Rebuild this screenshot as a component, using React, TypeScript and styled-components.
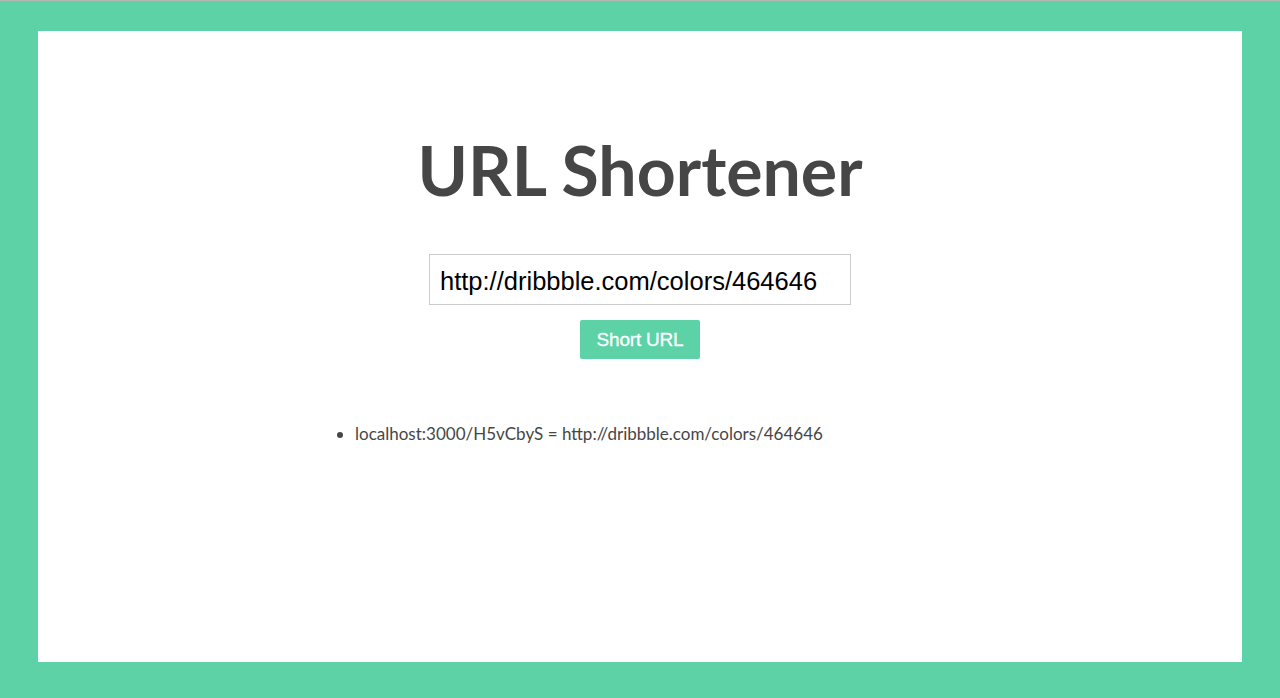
import React from "react";
import styled, { createGlobalStyle } from "styled-components";

const Global = createGlobalStyle`
  html, body { margin: 0; padding: 0; height: 100%; }
  body { background: #5cd2a6; font-family: Lato, "Liberation Sans", sans-serif; }
  #root { height: 100%; }
`;

const Frame = styled.div`
  box-sizing: border-box;
  height: 698px;
  border-top: 1px solid #b9b5b5;
  padding: 30px 38px 36px 38px;
  display: flex;
`;

const Panel = styled.main`
  flex: 1;
  background: #ffffff;
  display: flex;
  flex-direction: column;
  align-items: center;
  padding-top: 98px;
`;

const Title = styled.h1`
  margin: 0;
  font-family: Lato, sans-serif;
  font-weight: 700;
  font-size: 68px;
  line-height: 82px;
  color: #464646;
`;

const Form = styled.form`
  margin-top: 43px;
  display: flex;
  flex-direction: column;
  align-items: center;
  gap: 15px;
`;

const Input = styled.input`
  box-sizing: border-box;
  width: 422px;
  height: 51px;
  border: 1px solid #cccccc;
  padding: 3px 10px 0 10px;
  font-family: "Liberation Sans", Arial, sans-serif;
  font-size: 25.5px;
  color: #000;
  outline: none;
`;

const Button = styled.button`
  width: 120px;
  height: 39px;
  border: none;
  border-radius: 2px;
  background: #5cd2a6;
  color: #fff;
  font-family: "Liberation Sans", Arial, sans-serif;
  font-size: 19px;
  letter-spacing: -0.2px;
  -webkit-text-stroke: 0.3px #fff;
  cursor: pointer;
`;

const Results = styled.section`
  width: 650px;
  margin-top: 64px;
`;

const List = styled.ul`
  margin: 0;
  padding-left: 40px;
  color: #464646;
  font-family: Lato, sans-serif;
  font-size: 17px;
  line-height: 22px;
`;

export default function App() {
  return (
    <>
      <Global />
      <Frame>
        <Panel>
          <Title>URL Shortener</Title>
          <Form onSubmit={(e) => e.preventDefault()}>
            <Input defaultValue="http://dribbble.com/colors/464646" />
            <Button type="submit">Short URL</Button>
          </Form>
          <Results>
            <List>
              <li>localhost:3000/H5vCbyS = http://dribbble.com/colors/464646</li>
            </List>
          </Results>
        </Panel>
      </Frame>
    </>
  );
}
